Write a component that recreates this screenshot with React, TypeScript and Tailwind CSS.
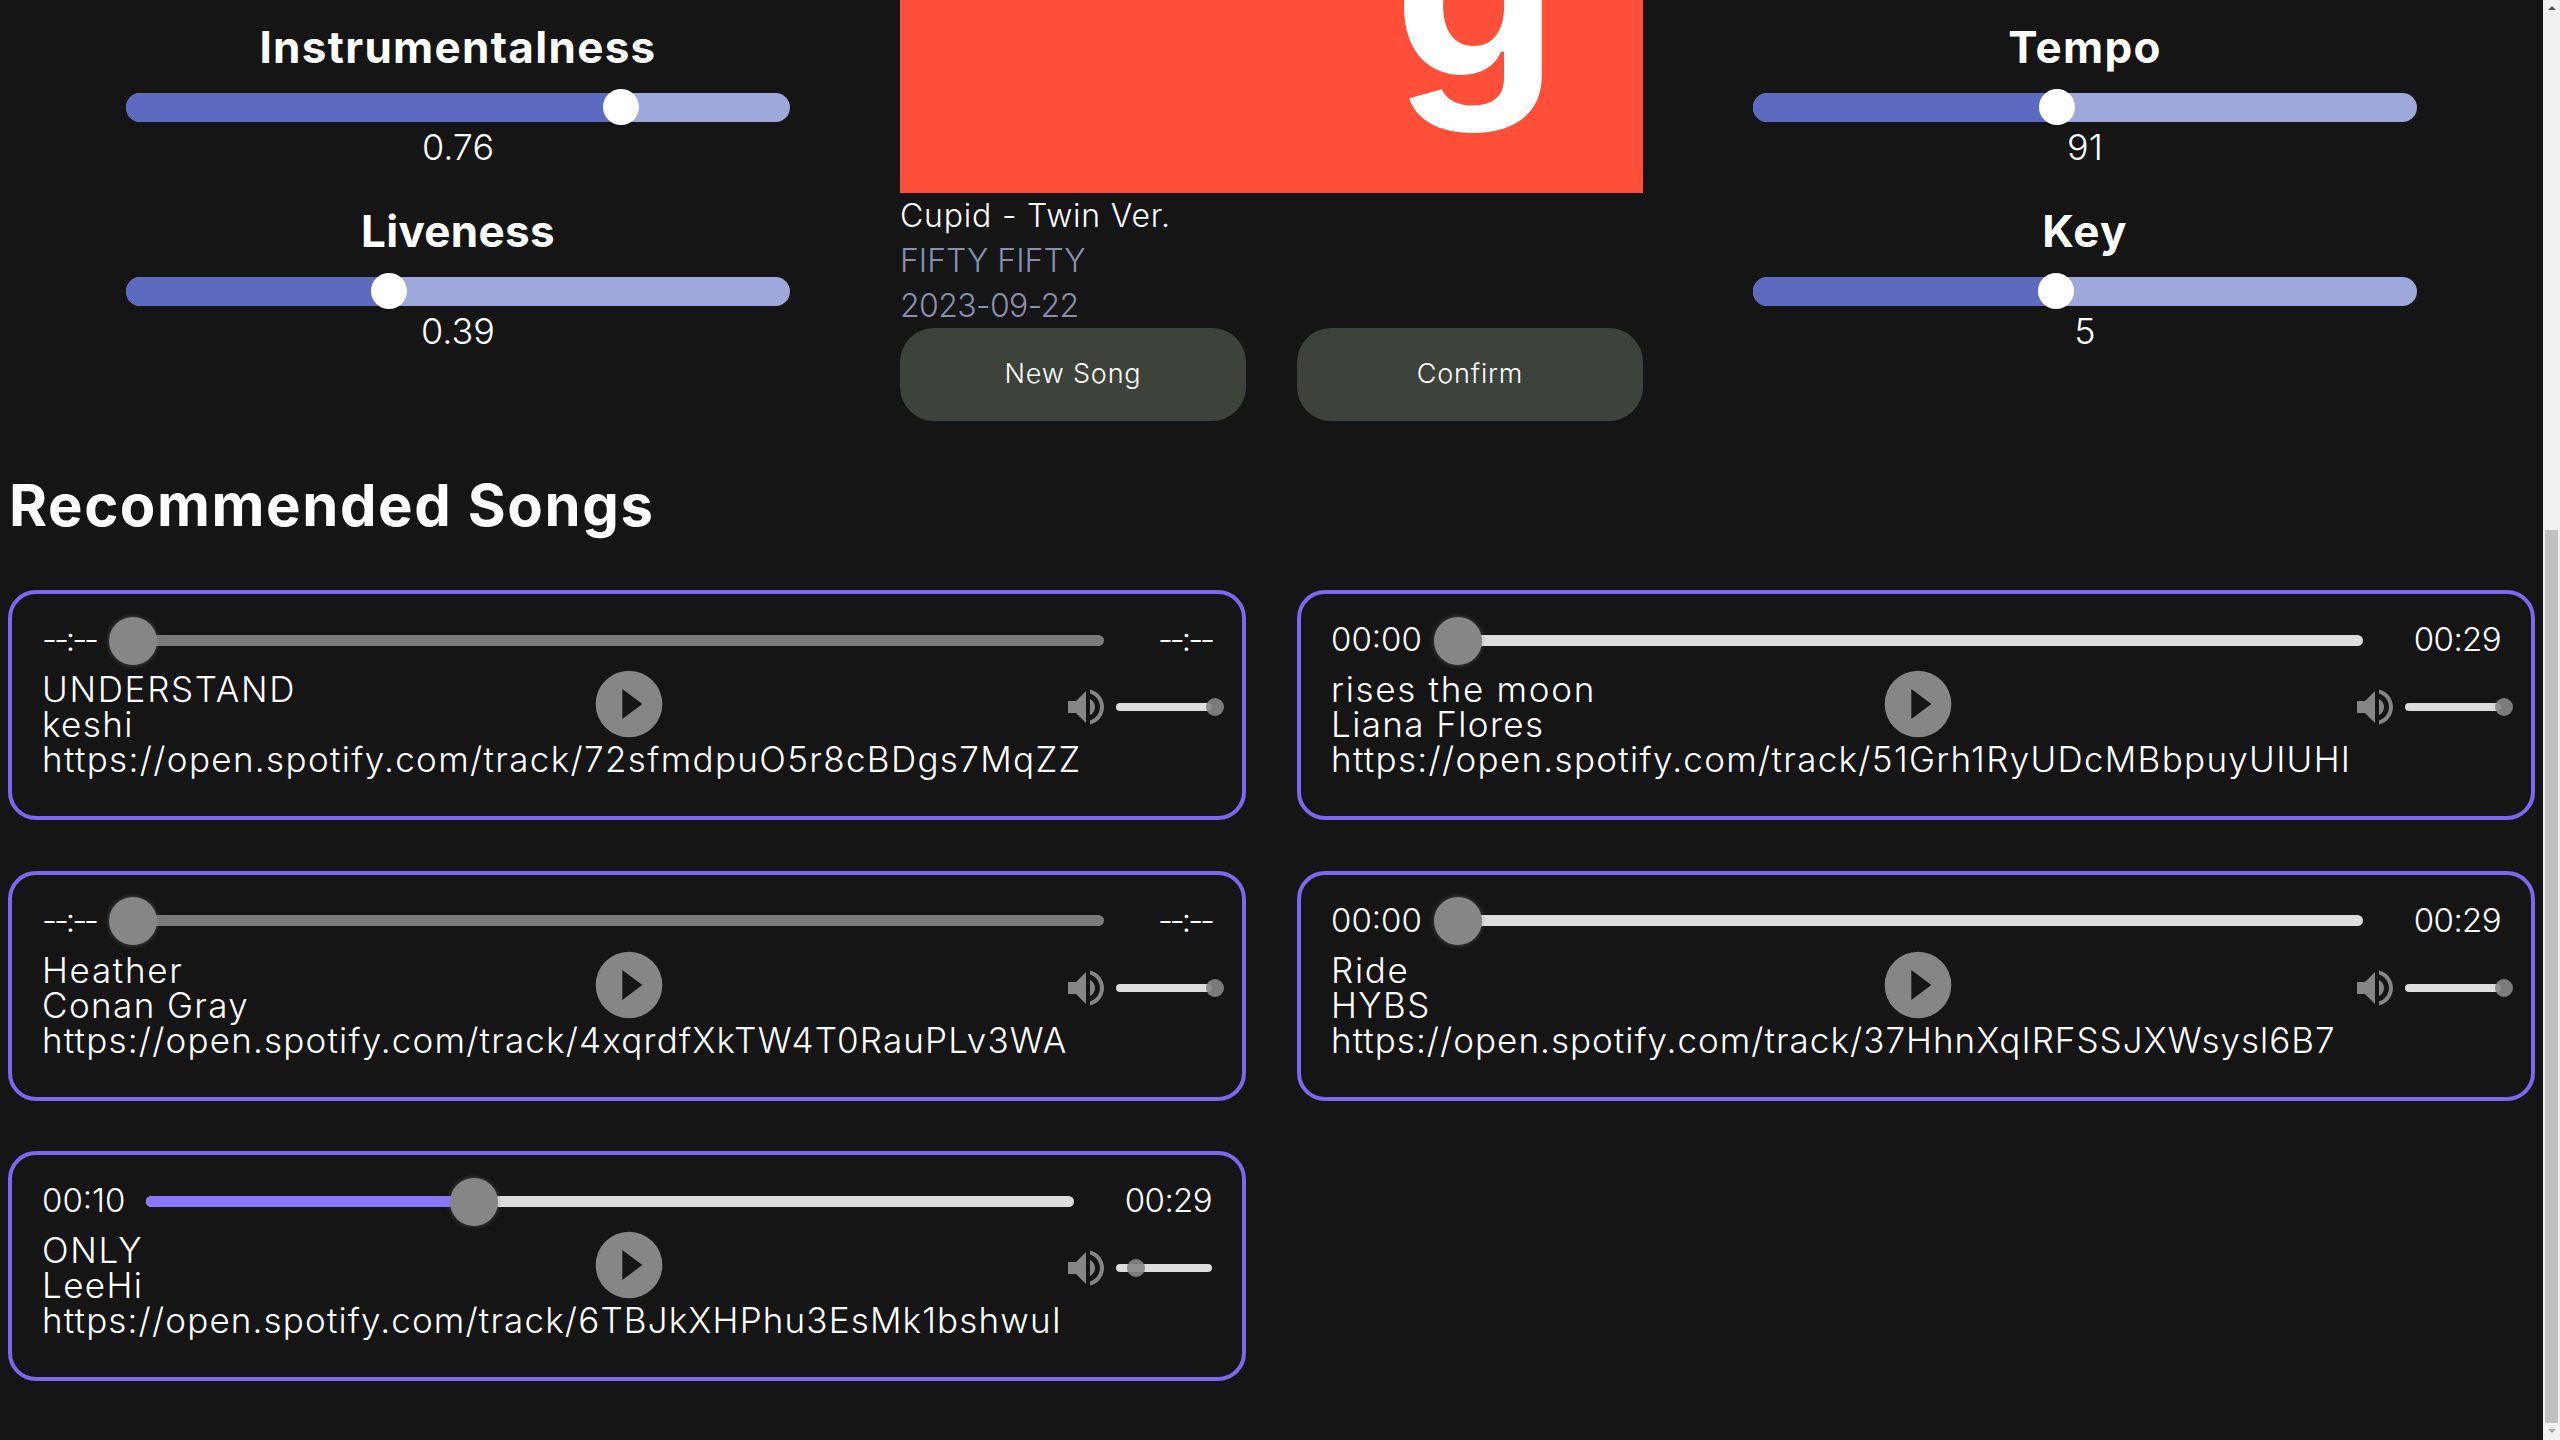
import React from 'react';

interface Song {
  title: string;
  artist: string;
  url: string;
  urlTracking: string;
  start: string;
  end: string;
  loaded: boolean;
  thumbLeft: number;
  filled?: number;
  volumeLeft: number;
}

const songs: Song[] = [
  { title: 'UNDERSTAND', artist: 'keshi', url: 'https://open.spotify.com/track/72sfmdpuO5r8cBDgs7MqZZ', urlTracking: 'tracking-[1.34px]', start: '--:--', end: '--:--', loaded: false, thumbLeft: -8, volumeLeft: 90 },
  { title: 'rises the moon', artist: 'Liana Flores', url: 'https://open.spotify.com/track/51Grh1RyUDcMBbpuyUIUHI', urlTracking: 'tracking-[1.3px]', start: '00:00', end: '00:29', loaded: true, thumbLeft: -9, volumeLeft: 90 },
  { title: 'Heather', artist: 'Conan Gray', url: 'https://open.spotify.com/track/4xqrdfXkTW4T0RauPLv3WA', urlTracking: 'tracking-[1.18px]', start: '--:--', end: '--:--', loaded: false, thumbLeft: -8, volumeLeft: 90 },
  { title: 'Ride', artist: 'HYBS', url: 'https://open.spotify.com/track/37HhnXqIRFSSJXWsysl6B7', urlTracking: 'tracking-[1.02px]', start: '00:00', end: '00:29', loaded: true, thumbLeft: -9, volumeLeft: 90 },
  { title: 'ONLY', artist: 'LeeHi', url: 'https://open.spotify.com/track/6TBJkXHPhu3EsMk1bshwuI', urlTracking: 'tracking-[1.15px]', start: '00:10', end: '00:29', loaded: true, thumbLeft: 304, filled: 328, volumeLeft: 11 },
];

const FeatureSlider = ({ label, value, thumb, tracking, className }: { label: string; value: string; thumb: number; tracking: string; className?: string }) => (
  <div className={`flex flex-col items-center ${className ?? ''}`}>
    <h3 className={`text-[44px] leading-[56px] font-bold text-white ${tracking}`}>{label}</h3>
    <div className="relative w-full h-[29px] mt-[18px] rounded-[15px] bg-[#9fa8da]">
      <div className="h-full rounded-l-[15px] bg-[#5c6bc0]" style={{ width: thumb }} />
      <div className="absolute top-[-4px] w-9 h-9 rounded-full bg-white" style={{ left: thumb - 18 }} />
    </div>
    <div className="text-[36px] leading-[50px] text-white font-light">{value}</div>
  </div>
);

const PlayIcon = () => (
  <svg viewBox="0 0 24 24" className="w-20 h-20 text-[#868686]" fill="currentColor">
    <path fillRule="evenodd" d="M10,16.5V7.5L16,12M12,2A10,10 0 0,0 2,12A10,10 0 0,0 12,22A10,10 0 0,0 22,12A10,10 0 0,0 12,2Z" />
  </svg>
);

const VolumeIcon = () => (
  <svg viewBox="0 0 24 24" className="w-12 h-12 text-[#868686]" fill="currentColor">
    <path d="M14,3.23V5.29C16.89,6.15 19,8.83 19,12C19,15.17 16.89,17.84 14,18.7V20.77C18,19.86 21,16.28 21,12C21,7.72 18,4.14 14,3.23M16.5,12C16.5,10.23 15.5,8.71 14,7.97V16C15.5,15.29 16.5,13.76 16.5,12M3,9V15H7L12,20V4L7,9H3Z" />
  </svg>
);

const SongCard = ({ song }: { song: Song }) => (
  <div className="h-[230px] rounded-[28px] border-4 border-[#7b68ee] px-[30px] pt-[22px] text-white">
    <div className="flex items-center h-12 text-[33px] font-light">
      <span className={song.loaded ? '' : 'tracking-[-3px]'}>{song.start}</span>
      <div className={`relative flex-1 h-[11px] ml-[21px] rounded-md ${song.loaded ? 'mr-[51px] bg-[#dddddd]' : 'mr-[54px] bg-[#7a7a7a]'}`}>
        {song.filled && <div className="h-full rounded-l-md bg-[#8a76ff]" style={{ width: song.filled }} />}
        <div className="absolute top-[-18px] w-12 h-12 rounded-full bg-[#868686] shadow-[0_0_5px_rgba(134,134,134,0.5)]" style={{ left: song.thumbLeft }} />
      </div>
      <span className={song.loaded ? 'tracking-[-0.6px]' : 'tracking-[-3px]'}>{song.end}</span>
    </div>
    <div className="flex items-start mt-2">
      <div className="flex-1 min-w-0 whitespace-nowrap text-[35px] leading-[35px] font-light">
        <div className="tracking-[1.7px]">{song.title}</div>
        <div className="tracking-[1.4px]">{song.artist}</div>
        <div className={song.urlTracking}>{song.url}</div>
      </div>
      <div className="ml-[3px] -mt-2 shrink-0">
        <PlayIcon />
      </div>
      <div className="flex-1 flex justify-end items-center gap-[6px] mt-[11px] h-12">
        <VolumeIcon />
        <div className="relative w-24 h-2 rounded-sm bg-[#dddddd]">
          <div className="absolute top-[-5px] w-[18px] h-[18px] rounded-full bg-[#868686] opacity-90" style={{ left: song.volumeLeft }} />
        </div>
      </div>
    </div>
  </div>
);

export default function App() {
  return (
    <div className="flex h-screen overflow-hidden bg-[#151515] font-['Inter','Liberation_Sans',sans-serif]">
      <main className="flex-1 min-w-0">
        <section className="flex gap-[110px] px-[126px]">
          <div className="w-[664px] pt-[19px]">
            <FeatureSlider label="Instrumentalness" value="0.76" thumb={495} tracking="tracking-[1.3px]" />
            <FeatureSlider label="Liveness" value="0.39" thumb={263} tracking="tracking-[0.3px]" className="mt-[31px]" />
          </div>
          <div className="w-[743px]">
            <div className="relative h-[193px] overflow-hidden bg-[#ff4f38]">
              <span className="absolute right-[85px] top-[-197px] text-[260px] leading-[360px] font-bold text-white">g</span>
            </div>
            <div className="text-[32px] leading-[45px] font-light">
              <div className="text-white tracking-[0.8px]">Cupid - Twin Ver.</div>
              <div className="text-[#8a8fae]">FIFTY FIFTY</div>
              <div className="text-[#8a8fae] tracking-[-0.6px]">2023-09-22</div>
            </div>
            <div className="flex gap-[51px]">
              <button className="flex-1 h-[93px] rounded-[34px] bg-[#3d423a] text-white text-[27px] font-light tracking-[0.8px]">New Song</button>
              <button className="flex-1 h-[93px] rounded-[34px] bg-[#3d423a] text-white text-[27px] font-light tracking-[0.8px]">Confirm</button>
            </div>
          </div>
          <div className="w-[664px] pt-[19px]">
            <FeatureSlider label="Tempo" value="91" thumb={304} tracking="tracking-[1.3px]" />
            <FeatureSlider label="Key" value="5" thumb={303} tracking="tracking-[1.3px]" className="mt-[31px]" />
          </div>
        </section>
        <h2 className="px-[9px] mt-[50px] text-[58px] leading-[68px] font-bold text-white tracking-[1.6px]">Recommended Songs</h2>
        <div className="grid grid-cols-2 gap-x-[51px] gap-y-[50.5px] px-2 mt-[51px]">
          {songs.map(song => (
            <SongCard key={song.url} song={song} />
          ))}
        </div>
      </main>
      <aside className="w-[17px] shrink-0 flex flex-col items-center bg-[#f1f1f1]">
        <div className="mt-[6px] w-0 h-0 border-x-[4px] border-x-transparent border-b-[4px] border-b-[#505050]" />
        <div className="mt-auto w-[13px] h-[893px] bg-[#c1c1c1]" />
        <div className="h-[17px] pt-[6px]">
          <div className="w-0 h-0 border-x-[4px] border-x-transparent border-t-[4px] border-t-[#a3a3a3]" />
        </div>
      </aside>
    </div>
  );
}
